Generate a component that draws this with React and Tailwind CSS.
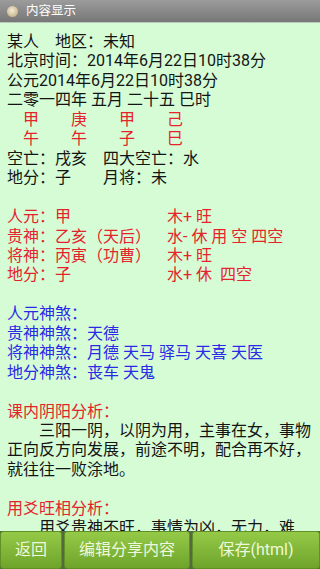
const RED = 'text-[#e5232a]';
const BLUE = 'text-[#2a2ae6]';

function TwoCol({ left, right, color }) {
  return (
    <div className={`flex ${color}`}>
      <span className="w-[160px] shrink-0 whitespace-pre">{left}</span>
      <span className="whitespace-pre">{right}</span>
    </div>
  );
}

function Blank() {
  return <div className="h-[19.45px]" />;
}

function Btn({ className, children }) {
  return (
    <button
      className={`flex items-center justify-center rounded-[3px] border border-[#5f8f25] bg-gradient-to-b from-[#95ca48] to-[#6ea42a] text-[16px] text-[#eef8dc] ${className}`}
    >
      {children}
    </button>
  );
}

export default function App() {
  return (
    <div
      className="flex h-[569px] w-[320px] flex-col overflow-hidden bg-[#d6fcd6]"
      style={{ fontFamily: 'Roboto, "Noto Sans CJK SC", sans-serif' }}
    >
      {/* title bar */}
      <div className="flex h-[23px] shrink-0 items-center gap-[8px] border-b border-[#b9c9b9] bg-gradient-to-b from-[#9c9c9c] to-[#777777] pl-[7px]">
        <div className="h-[11px] w-[11px] rounded-full bg-[radial-gradient(circle_at_45%_40%,#f4ecd6,#c9b98f_70%,#8c7d5c)]" />
        <span className="text-[12.5px] leading-none text-white">内容显示</span>
      </div>

      {/* content */}
      <div className="min-h-0 flex-1 overflow-hidden px-[7px] pt-[9px] text-[16px] leading-[19.45px] text-[#141414]">
        <div className="whitespace-pre">某人　地区：未知</div>
        <div className="whitespace-pre">北京时间：2014年6月22日10时38分</div>
        <div className="whitespace-pre">公元2014年6月22日10时38分</div>
        <div className="whitespace-pre">二零一四年 五月 二十五 巳时</div>
        <div className={`whitespace-pre ${RED}`}>　甲　　庚　　甲　　己</div>
        <div className={`whitespace-pre ${RED}`}>　午　　午　　子　　巳</div>
        <div className="whitespace-pre">空亡：戌亥　四大空亡：水</div>
        <div className="whitespace-pre">地分：子　　月将：未</div>
        <Blank />
        <TwoCol color={RED} left="人元：甲" right="木+ 旺" />
        <TwoCol color={RED} left="贵神：乙亥（天后）" right="水- 休 用 空 四空" />
        <TwoCol color={RED} left="将神：丙寅（功曹）" right="木+ 旺" />
        <TwoCol color={RED} left="地分：子" right="水+ 休  四空" />
        <Blank />
        <div className={BLUE}>人元神煞：</div>
        <div className={BLUE}>贵神神煞：天德</div>
        <div className={BLUE}>将神神煞：月德 天马 驿马 天喜 天医</div>
        <div className={BLUE}>地分神煞：丧车 天鬼</div>
        <Blank />
        <div className={RED}>课内阴阳分析：</div>
        <div className="w-[306px]">
          {'　　三阳一阴，以阴为用，主事在女，事物正向反方向发展，前途不明，配合再不好，就往往一败涂地。'}
        </div>
        <Blank />
        <div className={RED}>用爻旺相分析：</div>
        <div className="whitespace-pre">{'　　用爻贵神不旺，事情为凶，无力，难'}</div>
      </div>

      {/* bottom buttons */}
      <div className="flex h-[38px] shrink-0 gap-[2px] bg-[#55683f]">
        <Btn className="w-[62px]">返回</Btn>
        <Btn className="flex-1">编辑分享内容</Btn>
        <Btn className="w-[128px]">保存(html)</Btn>
      </div>
    </div>
  );
}
